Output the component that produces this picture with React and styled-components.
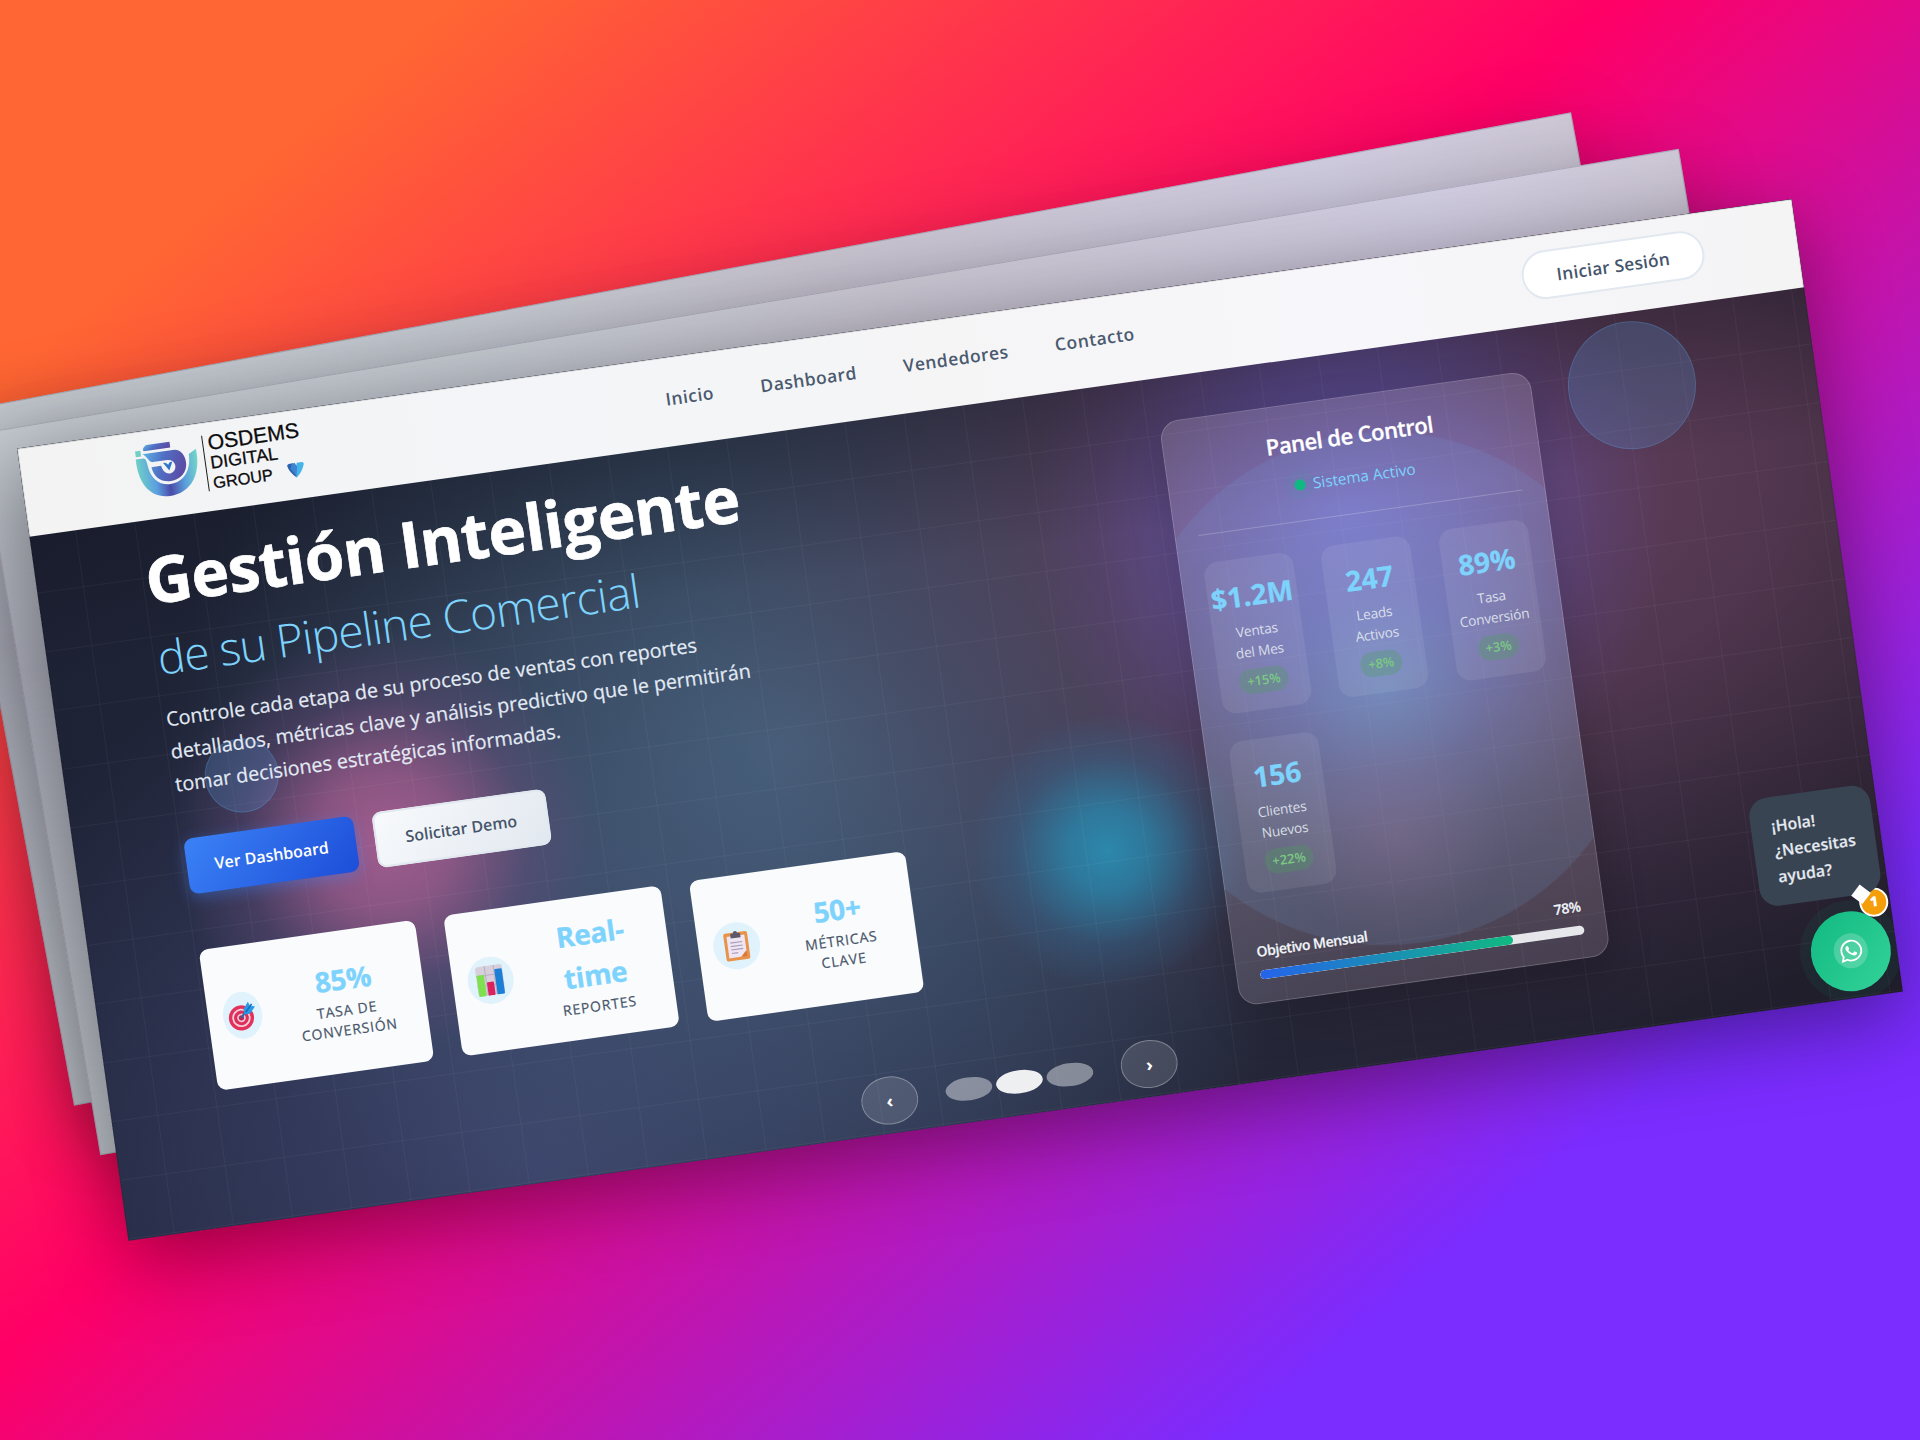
import React from "react";
import styled, { createGlobalStyle, css } from "styled-components";
import { FaWhatsapp } from "react-icons/fa";

const GlobalStyle = createGlobalStyle`
  *, *::before, *::after { box-sizing: border-box; }
  body {
    margin: 0;
    font-family: "Open Sans", "Noto Sans", sans-serif;
    -webkit-font-smoothing: antialiased;
  }
`;

const Stage = styled.div`
  position: relative;
  width: 1920px;
  height: 1440px;
  overflow: hidden;
  background: linear-gradient(140deg, #ff6633 12.5%, #ff0066 44.5%, #7b2cff 81%);
`;

const BackSheet = styled.div`
  position: absolute;
  left: ${(p) => p.$cx - p.$w / 2}px;
  top: ${(p) => p.$cy - p.$h / 2}px;
  width: ${(p) => p.$w}px;
  height: ${(p) => p.$h}px;
  transform: rotate(${(p) => p.$angle}deg);
  background:
    linear-gradient(180deg, transparent 0, rgba(90, 80, 110, 0.12) 90px, rgba(90, 80, 110, 0.26) 240px, rgba(90, 80, 110, 0.05) 100%),
    linear-gradient(90deg, #c2c8ce 0%, #c1c6ce 30%, #c6c2ce 55%, #d0cce0 85%, #cec8d6 100%);
  border: 1px solid rgba(70, 74, 90, 0.22);
  box-shadow: 0 20px 76px rgba(0, 0, 0, 0.26);
`;

const Window = styled.div`
  position: absolute;
  left: 64px;
  top: 320px;
  width: 1792px;
  height: 800px;
  transform: rotate(-8deg);
  overflow: hidden;
  display: flex;
  flex-direction: column;
  background:
    radial-gradient(circle 138px at 1024px 550px, rgba(40, 150, 188, 0.84) 0%, rgba(40, 140, 180, 0.72) 30%, rgba(48, 115, 160, 0.3) 68%, transparent 100%),
    radial-gradient(circle 212px at 309px 440px, rgba(182, 98, 152, 0.84) 0%, rgba(172, 94, 146, 0.7) 32%, rgba(130, 80, 135, 0.28) 68%, transparent 100%),
    linear-gradient(180deg, rgba(12, 14, 24, 0.3) 80px, transparent 240px, transparent 520px, rgba(20, 24, 40, 0.1) 800px),
    radial-gradient(circle 320px at 1310px 255px, rgba(106, 96, 200, 0.85) 0%, rgba(98, 84, 172, 0.68) 45%, rgba(92, 70, 140, 0.28) 80%, transparent 100%),
    radial-gradient(ellipse 800px 560px at 1440px 240px, rgba(114, 70, 104, 0.82) 0%, rgba(108, 68, 98, 0.62) 40%, rgba(96, 62, 90, 0.24) 75%, transparent 100%),
    radial-gradient(ellipse 620px 560px at 720px 400px, rgba(74, 100, 128, 0.9), transparent 100%),
    radial-gradient(ellipse 720px 560px at 420px 780px, rgba(72, 80, 128, 0.8), transparent 100%),
    linear-gradient(90deg, #1e2235 0%, #232a3c 35%, #262637 70%, #211d2a 100%);
  box-shadow: 0 22px 80px rgba(0, 0, 0, 0.4);

  &::after {
    content: "";
    position: absolute;
    inset: 0;
    border: 1px solid rgba(20, 20, 30, 0.15);
    pointer-events: none;
    z-index: 9;
  }
`;

const GridLines = styled.div`
  position: absolute;
  inset: 0;
  background-image:
    linear-gradient(rgba(255, 255, 255, 0.04) 1.4px, transparent 1.4px),
    linear-gradient(90deg, rgba(255, 255, 255, 0.04) 1.4px, transparent 1.4px);
  background-size: 59.75px 59.3px;
  background-position: 46px 27px;
`;

const FloatingCircle = styled.div`
  position: absolute;
  left: ${(p) => p.$x - p.$d / 2}px;
  top: ${(p) => p.$y - p.$d / 2}px;
  width: ${(p) => p.$d}px;
  height: ${(p) => p.$d}px;
  border-radius: 50%;
  background: rgba(92, 156, 220, 0.24);
  border: 1.5px solid rgba(90, 160, 215, 0.28);
`;

/* ---------- header ---------- */

const Header = styled.header`
  position: relative;
  z-index: 2;
  flex: none;
  height: 88.5px;
  padding: 0 94px 7.5px 114.5px;
  display: flex;
  align-items: center;
  background: linear-gradient(90deg, #f3f3f3 0%, #f3f5f8 28%, #f5f5f6 52%, #f7f6fa 74%, #f4f4f5 100%);
`;

const Logo = styled.div`
  display: flex;
  align-items: center;
  width: 173px;
  color: #0b0b0d;
`;

const LogoDivider = styled.i`
  width: 1.6px;
  height: 56px;
  margin: 0 4.5px 0 5px;
  background: #1b1b1f;
`;

const LogoWords = styled.div`
  display: flex;
  flex-direction: column;
  font-family: "Liberation Sans", Arial, sans-serif;
  line-height: 20px;
`;

const LogoWord = styled.span`
  font-size: ${(p) => p.$size}px;
  -webkit-text-stroke: 0.3px #0b0b0d;
  display: flex;
  align-items: center;
`;

const Gem = styled.svg`
  margin-left: 15.5px;
  position: relative;
  overflow: visible;
`;

const Nav = styled.nav`
  display: flex;
  gap: 47.2px;
  margin-left: 361.5px;
  padding-top: 1px;
`;

const NavLink = styled.a`
  font-size: 17.5px;
  font-weight: 600;
  letter-spacing: 0.5px;
  line-height: 24px;
  color: #4b5a6f;
`;

const LoginButton = styled.button`
  margin-left: auto;
  width: 184px;
  height: 49px;
  border: 2px solid #e2e8f0;
  border-radius: 25px;
  background: #fff;
  font: 600 17.3px/24px "Open Sans", sans-serif;
  letter-spacing: 0.25px;
  color: #46556a;
  padding: 2px 0 0;
`;

/* ---------- hero ---------- */

const Hero = styled.main`
  position: relative;
  z-index: 1;
  display: flex;
  justify-content: space-between;
  padding: 24.5px 284px 0 110px;
`;

const Copy = styled.section`
  width: 714px;
`;

const Title = styled.h1`
  position: relative;
  top: 1px;
  margin: 0 0 12.5px -1px;
  font-size: 64px;
  line-height: 70px;
  font-weight: 700;
  letter-spacing: -0.65px;
  color: #fff;
  -webkit-text-stroke: 0.7px #fff;
  white-space: nowrap;
`;

const Subtitle = styled.h2`
  margin: 0 0 16px 0;
  font-size: 46px;
  line-height: 60px;
  font-weight: 300;
  letter-spacing: -0.85px;
  color: #7dd3fc;
  white-space: nowrap;
`;

const Lead = styled.p`
  margin: 0 0 38px 0;
  font-size: 19.8px;
  line-height: 33.4px;
  letter-spacing: -0.02px;
  color: #e2eaf4;
  -webkit-text-stroke: 0.2px #e2eaf4;
  white-space: nowrap;
`;

const Actions = styled.div`
  display: flex;
  gap: 18.5px;
  margin-bottom: 56px;
`;

const ActionButton = styled.button`
  height: 56px;
  width: ${(p) => p.$w}px;
  padding: 0;
  border: 0;
  border-radius: 9px;
  font: 600 16px/24px "Open Sans", sans-serif;
  ${(p) =>
    p.$primary
      ? css`
          color: #fff;
          background: linear-gradient(135deg, #3b82f6, #1d4ed8);
          box-shadow: 0 4px 15px rgba(59, 130, 246, 0.4);
        `
      : css`
          color: #475569;
          background: linear-gradient(135deg, #f8fafc, #e2e8f0);
          box-shadow: inset 0 0 0 2px #e2e8f0;
        `}
`;

const Features = styled.div`
  display: flex;
  gap: 29px;
`;

const FeatureCard = styled.article`
  width: 218.4px;
  height: 142px;
  padding: 0 15px;
  display: flex;
  align-items: center;
  gap: 20px;
  border-radius: 9px;
  background: #f9fbfd;
`;

const FeatureIcon = styled.div`
  flex: none;
  width: ${(p) => p.$w}px;
  height: 47.5px;
  border-radius: 50%;
  background: #e0f2fb;
  display: flex;
  align-items: center;
  justify-content: center;
`;

const FeatureText = styled.div`
  flex: 1;
  padding: 0 0 4px 0;
  text-align: center;
  white-space: nowrap;
`;

const FeatureValue = styled.div`
  margin-bottom: 1.4px;
  font-size: 28px;
  line-height: 42px;
  font-weight: 700;
  letter-spacing: -0.3px;
  color: #7dd3fc;
  -webkit-text-stroke: 0.3px #7dd3fc;
`;

const FeatureLabel = styled.div`
  font-size: 14px;
  line-height: 20.4px;
  font-weight: 500;
  letter-spacing: 0.85px;
  color: #475569;
  -webkit-text-stroke: 0.2px #475569;
`;

/* ---------- control panel ---------- */

const Panel = styled.aside`
  position: relative;
  width: 374px;
  height: 590px;
  margin-top: 20px;
  padding: 23.5px 22.5px 22.5px;
  border: 1px solid rgba(255, 255, 255, 0.17);
  border-radius: 19px;
  overflow: hidden;
  background:
    radial-gradient(circle 110px at 176px 440px, rgba(190, 130, 170, 0.2), transparent 100%),
    radial-gradient(circle 257px at 186px 294px, rgba(118, 196, 240, 0.42) 0%, rgba(112, 176, 242, 0.27) 38%, rgba(110, 180, 245, 0.13) 85%, rgba(110, 180, 245, 0.12) 99.6%, transparent 100%),
    linear-gradient(rgba(255, 235, 245, 0.17), rgba(255, 235, 245, 0.14));
`;

const PanelShadow = styled.div`
  border-radius: 19px;
  position: absolute;
  left: 1134px;
  top: 133px;
  width: 374px;
  height: 590px;
  box-shadow: 0 18px 44px rgba(0, 0, 0, 0.2);
`;

const PanelHead = styled.div`
  padding-bottom: 24px;
  margin-bottom: 27.5px;
  border-bottom: 1px solid rgba(255, 255, 255, 0.22);
  text-align: center;
`;

const PanelTitle = styled.h3`
  position: relative;
  top: -0.5px;
  margin: 0 0 14.8px;
  font-size: 22px;
  line-height: 30px;
  font-weight: 600;
  letter-spacing: -0.47px;
  color: #fff;
  -webkit-text-stroke: 0.3px #fff;
`;

const Status = styled.div`
  display: flex;
  align-items: center;
  justify-content: center;
  gap: 8px;
  font-size: 15.3px;
  line-height: 24px;
  color: #7dd3fc;
`;

const StatusDot = styled.i`
  width: 10.5px;
  height: 10.5px;
  border-radius: 50%;
  background: #10b981;
  box-shadow: 0 0 0 9px rgba(16, 185, 129, 0.05);
`;

const Stats = styled.div`
  display: grid;
  grid-template-columns: repeat(3, 90px);
  grid-auto-rows: 153.5px;
  justify-content: space-between;
  row-gap: 27.4px;
`;

const Stat = styled.div`
  padding-top: 16px;
  display: flex;
  flex-direction: column;
  align-items: center;
  border-radius: 14px;
  background: rgba(255, 255, 255, 0.08);
  white-space: nowrap;
  text-align: center;
`;

const StatValue = styled.div`
  font-size: 28px;
  line-height: 42px;
  font-weight: 700;
  color: #7dd3fc;
  -webkit-text-stroke: 0.3px #7dd3fc;
`;

const StatLabel = styled.div`
  margin: 4px 0 7px;
  font-size: 13.7px;
  line-height: 21.2px;
  letter-spacing: -0.2px;
  color: rgba(226, 232, 240, 0.92);
`;

const StatTrend = styled.div`
  padding: 0 7.5px;
  height: 25px;
  border-radius: 12px;
  background: rgba(74, 160, 90, 0.3);
  font-size: 13px;
  line-height: 24px;
  font-weight: 600;
  color: #7cc884;
`;

const GoalRow = styled.div`
  display: flex;
  justify-content: space-between;
  margin-top: 48px;
  font-size: 14px;
  line-height: 20px;
  font-weight: 600;
  letter-spacing: -0.42px;
  color: #f1f5f9;
  -webkit-text-stroke: 0.2px #f1f5f9;
`;

const GoalTrack = styled.div`
  margin-top: 8.6px;
  height: 9px;
  border-radius: 5px;
  overflow: hidden;
  background: #e5e7eb;
`;

const GoalFill = styled.div`
  width: 78%;
  height: 100%;
  border-radius: 5px;
  background: linear-gradient(90deg, #2563eb, #10b981);
`;

/* ---------- carousel ---------- */

const Carousel = styled.div`
  position: relative;
  z-index: 1;
  display: flex;
  justify-content: center;
  align-items: center;
  padding: 20px 0 0 17px;
`;

const ArrowButton = styled.button`
  width: 57px;
  height: 47.5px;
  padding: 1px 0 0 0;
  border-radius: 50%;
  border: 1.5px solid rgba(255, 255, 255, 0.3);
  background: rgba(255, 255, 255, 0.13);
  color: #fff;
  font: 700 18px/20px "Open Sans", sans-serif;
`;

const Dots = styled.div`
  display: flex;
  gap: 4.7px;
  margin: 0 28px;
`;

const Dot = styled.i`
  width: 46.6px;
  height: 23.3px;
  border-radius: 50%;
  background: rgba(255, 255, 255, ${(p) => (p.$active ? 0.92 : 0.42)});
`;

/* ---------- chat ---------- */

const ChatButton = styled.div`
  position: absolute;
  left: 1706px;
  top: 712.5px;
  width: 80px;
  height: 80px;
  z-index: 3;
  border-radius: 50%;
  display: flex;
  align-items: center;
  justify-content: center;
  color: #fff;
  background: linear-gradient(135deg, #10b981, #34d399);
  box-shadow: 0 0 0 11px rgba(16, 185, 129, 0.07);
`;

const ChatGlyph = styled.div`
  width: 34.5px;
  height: 34.5px;
  border-radius: 50%;
  display: flex;
  align-items: center;
  justify-content: center;
  background: rgba(255, 255, 255, 0.2);
`;

const ChatBadge = styled.div`
  position: absolute;
  right: -4px;
  top: -19.5px;
  width: 28.6px;
  height: 28.6px;
  border-radius: 50%;
  border: 2px solid #fff;
  background: #f59e0b;
  font-size: 14px;
  line-height: 24px;
  font-weight: 800;
  text-align: center;
`;

const ChatBubble = styled.div`
  position: absolute;
  left: 1664px;
  top: 589px;
  width: 121.5px;
  height: 109px;
  z-index: 4;
  padding: 16.5px 0 0 20.5px;
  border-radius: 19px;
  background: #394453;
  color: #e5eaf1;
  font-size: 15.8px;
  line-height: 25.6px;
  font-weight: 600;
  letter-spacing: 0.1px;
  -webkit-text-stroke: 0.2px #e5eaf1;

  &::after {
    content: "";
    position: absolute;
    right: 15px;
    bottom: -7px;
    width: 14px;
    height: 14px;
    background: #fff;
    transform: rotate(45deg);
  }
`;

/* ---------- drawings ---------- */

const LogoMark = () => (
  <svg width="64" height="58" viewBox="0 0 66 58">
    <defs>
      <linearGradient id="ring" x1="0" x2="1" y1="0" y2="0">
        <stop offset="0" stopColor="#6fcfc6" />
        <stop offset="0.28" stopColor="#5a9fe0" />
        <stop offset="0.5" stopColor="#4b4ba8" />
        <stop offset="0.75" stopColor="#5aa0dc" />
        <stop offset="1" stopColor="#74d6c8" />
      </linearGradient>
      <linearGradient id="bowl" x1="0" x2="1" y1="0" y2="0.3">
        <stop offset="0" stopColor="#5fb4e6" />
        <stop offset="0.5" stopColor="#4f6fc4" />
        <stop offset="1" stopColor="#5b4ea6" />
      </linearGradient>
    </defs>
    <path d="M14 1.500H38V7.500H10.500C8.500 6 11 2.500 14 1.500Z" fill="url(#bowl)" />
    <rect x="1.500" y="6.500" width="5.500" height="6" fill="#6fcfc6" />
    <path d="M1 15H9C12 15.500 12 20 12.500 24C14 37 22 45 33 45C47 45 56 34 56 17L64 12.500C66 39 53 57 31 57C11 57 0 41 1 15Z" fill="url(#ring)" />
    <path d="M8.500 10.500H42C49 11.500 52 18 52 25C52 35 44 42 34 42C24 42 17 35.500 16 25H26C27 31 30 34 34 34C38.500 34 41 30 40.500 26C40 22 37 20 33 20H18C14 20 13 13 8.500 10.500Z" fill="url(#bowl)" />
    <path d="M28.500 22.500Q31 21.500 33.500 25Q35 21.500 38 22.500L33.800 31Z" fill="#2f78c8" />
  </svg>
);

const GemMark = () => (
  <Gem width="17" height="15" viewBox="0 0 17 15">
    <path d="M0 1.500Q1 0 3 0H6L9 8L8 14.500Q1 8 0 1.500Z" fill="#2b62ae" />
    <path d="M10 0H15Q17.500 0.500 16.500 3Q14 10 8 14.500L7 9Z" fill="#45b4ea" />
    <path d="M5 0H8L9.800 4L8 13L3 5Z" fill="#3f84d0" />
  </Gem>
);

const IconSvg = styled.svg`
  flex: none;
`;

const TargetIcon = () => (
  <IconSvg width="29" height="30" viewBox="0 0 29 30">
    <circle cx="13" cy="17" r="12.600" fill="#e4315c" />
    <circle cx="13" cy="17" r="9.200" fill="#f3cfdb" />
    <circle cx="13" cy="17" r="7.400" fill="#dd2f5a" />
    <circle cx="13" cy="17" r="4.300" fill="#f0c5d4" />
    <circle cx="13" cy="17" r="2.600" fill="#c22350" />
    <path d="M13 17L20 9" stroke="#1b6fae" strokeWidth="2" />
    <path d="M16 9L21.500 2L23 6L28 7.500L22 14L16.500 14Z" fill="#2a9ae6" />
    <path d="M18 12L25 4.500" stroke="#1b6cc0" strokeWidth="1.600" />
  </IconSvg>
);

const ChartIcon = () => (
  <IconSvg width="30" height="31" viewBox="0 0 30 31">
    <rect x="1" y="0.500" width="27" height="29.500" rx="3.500" fill="#d8cfdc" />
    <path d="M1 10H28M1 20H28M10.500 0.500V30M19.500 0.500V30" stroke="#b9afc0" strokeWidth="1" />
    <rect x="1.500" y="9" width="7.500" height="21.500" rx="1" fill="#7ee04f" />
    <rect x="11" y="17" width="7" height="13.500" rx="1" fill="#d9225f" />
    <rect x="20" y="5" width="7.500" height="25.500" rx="1" fill="#1c7fd6" />
  </IconSvg>
);

const ClipboardIcon = () => (
  <IconSvg width="27" height="31" viewBox="0 0 27 31">
    <rect x="1.500" y="2" width="24" height="28" rx="2" fill="#e8924a" />
    <path d="M4.500 5.500H22.500V22L17.500 27H4.500Z" fill="#efe6f2" />
    <path d="M22.500 21V27H16.500Z" fill="#d9783a" />
    <path d="M7.500 12H19.500M7.500 15.500H19.500M7.500 19H19.500M7.500 22.500H14" stroke="#a79cbc" strokeWidth="1.100" />
    <path d="M8.500 7.500V4Q8.500 2.800 10 2.800H11.300Q11.500 0.500 13.500 0.500T15.700 2.800H17Q18.500 2.800 18.500 4V7.500Z" fill="#5b5a6a" />
  </IconSvg>
);

/* ---------- content ---------- */

const navItems = ["Inicio", "Dashboard", "Vendedores", "Contacto"];

const features = [
  { icon: <TargetIcon />, iconWidth: 39, value: ["85%"], label: ["TASA DE", "CONVERSIÓN"] },
  { icon: <ChartIcon />, iconWidth: 46, value: ["Real-", "time"], label: ["REPORTES"] },
  { icon: <ClipboardIcon />, iconWidth: 47.5, value: ["50+"], label: ["MÉTRICAS", "CLAVE"] },
];

const stats = [
  { value: "$1.2M", label: ["Ventas", "del Mes"], trend: "+15%" },
  { value: "247", label: ["Leads", "Activos"], trend: "+8%" },
  { value: "89%", label: ["Tasa", "Conversión"], trend: "+3%" },
  { value: "156", label: ["Clientes", "Nuevos"], trend: "+22%" },
];

const lines = (parts) =>
  parts.map((part, i) => (
    <React.Fragment key={part}>
      {i > 0 && <br />}
      {part}
    </React.Fragment>
  ));

export default function App() {
  return (
    <Stage>
      <GlobalStyle />
      <BackSheet $cx={822.3} $cy={608.8} $w={1653} $h={703.6} $angle={-10.5} />
      <BackSheet $cx={889.6} $cy={651.9} $w={1723} $h={732} $angle={-9.5} />
      <Window>
        <GridLines />
        <FloatingCircle $x={1607.5} $y={161.5} $d={128} />
        <FloatingCircle $x={177} $y={355} $d={74} />
        <PanelShadow />

        <Header>
          <Logo>
            <LogoMark />
            <LogoDivider />
            <LogoWords>
              <LogoWord $size={21.2}>OSDEMS</LogoWord>
              <LogoWord $size={17.8}>DIGITAL</LogoWord>
              <LogoWord $size={16.4}>
                GROUP
                <GemMark />
              </LogoWord>
            </LogoWords>
          </Logo>
          <Nav>
            {navItems.map((item) => (
              <NavLink key={item}>{item}</NavLink>
            ))}
          </Nav>
          <LoginButton>Iniciar Sesión</LoginButton>
        </Header>

        <Hero>
          <Copy>
            <Title>Gestión Inteligente</Title>
            <Subtitle>de su Pipeline Comercial</Subtitle>
            <Lead>
              {lines([
                "Controle cada etapa de su proceso de ventas con reportes",
                "detallados, métricas clave y análisis predictivo que le permitirán",
                "tomar decisiones estratégicas informadas.",
              ])}
            </Lead>
            <Actions>
              <ActionButton $primary $w={171}>Ver Dashboard</ActionButton>
              <ActionButton $w={175}>Solicitar Demo</ActionButton>
            </Actions>
            <Features>
              {features.map((f) => (
                <FeatureCard key={f.label[0]}>
                  <FeatureIcon $w={f.iconWidth}>{f.icon}</FeatureIcon>
                  <FeatureText>
                    <FeatureValue>{lines(f.value)}</FeatureValue>
                    <FeatureLabel>{lines(f.label)}</FeatureLabel>
                  </FeatureText>
                </FeatureCard>
              ))}
            </Features>
          </Copy>

          <Panel>
            <PanelHead>
              <PanelTitle>Panel de Control</PanelTitle>
              <Status>
                <StatusDot />
                Sistema Activo
              </Status>
            </PanelHead>
            <Stats>
              {stats.map((s) => (
                <Stat key={s.value}>
                  <StatValue>{s.value}</StatValue>
                  <StatLabel>{lines(s.label)}</StatLabel>
                  <StatTrend>{s.trend}</StatTrend>
                </Stat>
              ))}
            </Stats>
            <GoalRow>
              <span>Objetivo Mensual</span>
              <span>78%</span>
            </GoalRow>
            <GoalTrack>
              <GoalFill />
            </GoalTrack>
          </Panel>
        </Hero>

        <Carousel>
          <ArrowButton>‹</ArrowButton>
          <Dots>
            <Dot />
            <Dot $active />
            <Dot />
          </Dots>
          <ArrowButton>›</ArrowButton>
        </Carousel>

        <ChatButton>
          <ChatBadge>1</ChatBadge>
          <ChatGlyph>
            <FaWhatsapp size={25} />
          </ChatGlyph>
        </ChatButton>
        <ChatBubble>{lines(["¡Hola!", "¿Necesitas", "ayuda?"])}</ChatBubble>
      </Window>
    </Stage>
  );
}
